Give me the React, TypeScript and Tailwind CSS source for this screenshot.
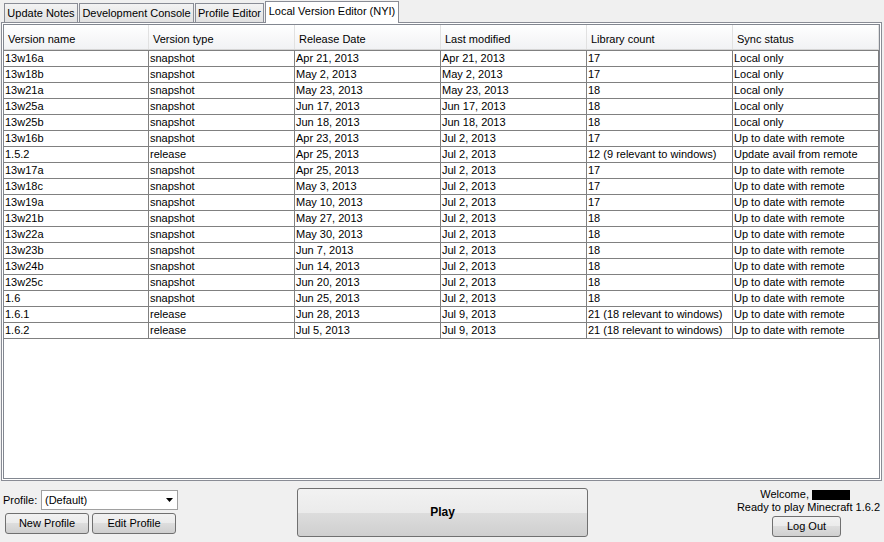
import React from 'react';

type Row = [string, string, string, string, string, string];

const rows: Row[] = [
  ['13w16a', 'snapshot', 'Apr 21, 2013', 'Apr 21, 2013', '17', 'Local only'],
  ['13w18b', 'snapshot', 'May 2, 2013', 'May 2, 2013', '17', 'Local only'],
  ['13w21a', 'snapshot', 'May 23, 2013', 'May 23, 2013', '18', 'Local only'],
  ['13w25a', 'snapshot', 'Jun 17, 2013', 'Jun 17, 2013', '18', 'Local only'],
  ['13w25b', 'snapshot', 'Jun 18, 2013', 'Jun 18, 2013', '18', 'Local only'],
  ['13w16b', 'snapshot', 'Apr 23, 2013', 'Jul 2, 2013', '17', 'Up to date with remote'],
  ['1.5.2', 'release', 'Apr 25, 2013', 'Jul 2, 2013', '12 (9 relevant to windows)', 'Update avail from remote'],
  ['13w17a', 'snapshot', 'Apr 25, 2013', 'Jul 2, 2013', '17', 'Up to date with remote'],
  ['13w18c', 'snapshot', 'May 3, 2013', 'Jul 2, 2013', '17', 'Up to date with remote'],
  ['13w19a', 'snapshot', 'May 10, 2013', 'Jul 2, 2013', '17', 'Up to date with remote'],
  ['13w21b', 'snapshot', 'May 27, 2013', 'Jul 2, 2013', '18', 'Up to date with remote'],
  ['13w22a', 'snapshot', 'May 30, 2013', 'Jul 2, 2013', '18', 'Up to date with remote'],
  ['13w23b', 'snapshot', 'Jun 7, 2013', 'Jul 2, 2013', '18', 'Up to date with remote'],
  ['13w24b', 'snapshot', 'Jun 14, 2013', 'Jul 2, 2013', '18', 'Up to date with remote'],
  ['13w25c', 'snapshot', 'Jun 20, 2013', 'Jul 2, 2013', '18', 'Up to date with remote'],
  ['1.6', 'snapshot', 'Jun 25, 2013', 'Jul 2, 2013', '18', 'Up to date with remote'],
  ['1.6.1', 'release', 'Jun 28, 2013', 'Jul 9, 2013', '21 (18 relevant to windows)', 'Up to date with remote'],
  ['1.6.2', 'release', 'Jul 5, 2013', 'Jul 9, 2013', '21 (18 relevant to windows)', 'Up to date with remote'],
];

const headers = ['Version name', 'Version type', 'Release Date', 'Last modified', 'Library count', 'Sync status'];
const widths = ['w-[145px]', 'w-[146px]', 'w-[146px]', 'w-[146px]', 'w-[146px]', 'w-[146px]'];

const tabs = [
  { label: 'Update Notes', w: 'w-[74px]', ml: 'ml-[4px]' },
  { label: 'Development Console', w: 'w-[115px]', ml: 'ml-[1px]' },
  { label: 'Profile Editor', w: 'w-[69px]', ml: 'ml-[1px]' },
];

const btn =
  'border border-[#707070] rounded-[3px] bg-[linear-gradient(#f2f2f2_0%,#ebebeb_50%,#dddddd_50%,#cfcfcf_100%)] flex items-center justify-center';

export default function App() {
  return (
    <div className="w-[884px] h-[542px] bg-[#f0f0f0] text-black text-[11px] leading-[13px] font-['Liberation_Sans',Arial,sans-serif] overflow-hidden">
      {/* tabs */}
      <div className="flex items-end h-[22px] relative z-10">
        {tabs.map((t) => (
          <div
            key={t.label}
            className={`${t.ml} ${t.w} h-[19px] border border-b-0 border-[#898c95] bg-[linear-gradient(#f3f3f3,#e2e2e2)] flex items-center justify-center`}
          >
            {t.label}
          </div>
        ))}
        <div className="ml-[1px] w-[134px] h-[22px] -mb-[1px] border border-b-0 border-[#898c95] bg-white flex items-center justify-center pb-[2px]">
          Local Version Editor (NYI)
        </div>
      </div>

      {/* panel */}
      <div className="ml-[1px] w-[881px] h-[459px] border border-[#898c95] bg-white p-[1px]">
        <div className="h-full border border-[#828790] bg-white flex flex-col">
          <div className="flex h-[25px] border-b border-[#d5d5d5] bg-[linear-gradient(#ffffff,#f1f2f4)]">
            {headers.map((h, i) => (
              <div
                key={h}
                className={`${widths[i]} shrink-0 border-r border-[#e1e1e1] pl-[4px] pt-[8px]`}
              >
                {h}
              </div>
            ))}
          </div>
          <div className="border-t border-[#808080]">
            {rows.map((r) => (
              <div key={r[0]} className="flex h-[16px] border-b border-[#808080]">
                {r.map((c, i) => (
                  <div
                    key={i}
                    className={`${widths[i]} shrink-0 border-r border-[#808080] pl-[1px] leading-[15px] whitespace-nowrap overflow-hidden`}
                  >
                    {c}
                  </div>
                ))}
              </div>
            ))}
          </div>
        </div>
      </div>

      {/* bottom bar */}
      <div className="flex h-[60px]">
        <div className="w-[294px] pl-[3px] pt-[9px]">
          <div className="flex items-center h-[20px]">
            <span className="w-[38px]">Profile:</span>
            <div className="w-[137px] h-[20px] border border-[#a0a0a0] bg-white flex items-center pl-[3px] justify-between">
              <span>(Default)</span>
              <span className="w-[16px] h-full flex items-center justify-center">
                <svg width="7" height="4" viewBox="0 0 7 4">
                  <path d="M0 0h7L3.5 4z" fill="#000" />
                </svg>
              </span>
            </div>
          </div>
          <div className="flex mt-[3px] ml-[2px] gap-[3px]">
            <div className={`${btn} w-[84px] h-[21px]`}>New Profile</div>
            <div className={`${btn} w-[84px] h-[21px]`}>Edit Profile</div>
          </div>
        </div>
        <div className="pt-[7px] ml-[3px]">
          <div className={`${btn} w-[291px] h-[49px] font-bold text-[12px]`}>Play</div>
        </div>
        <div className="flex-1 flex flex-col items-end pr-[4px] pt-[7px]">
          <div className="flex items-center pr-[30px]">
            <span>Welcome,&nbsp;</span>
            <span className="inline-block w-[38px] h-[10px] bg-black" />
          </div>
          <div>Ready to play Minecraft 1.6.2</div>
          <div className={`${btn} w-[69px] h-[21px] mt-[2px] mr-[39px]`}>Log Out</div>
        </div>
      </div>
    </div>
  );
}
